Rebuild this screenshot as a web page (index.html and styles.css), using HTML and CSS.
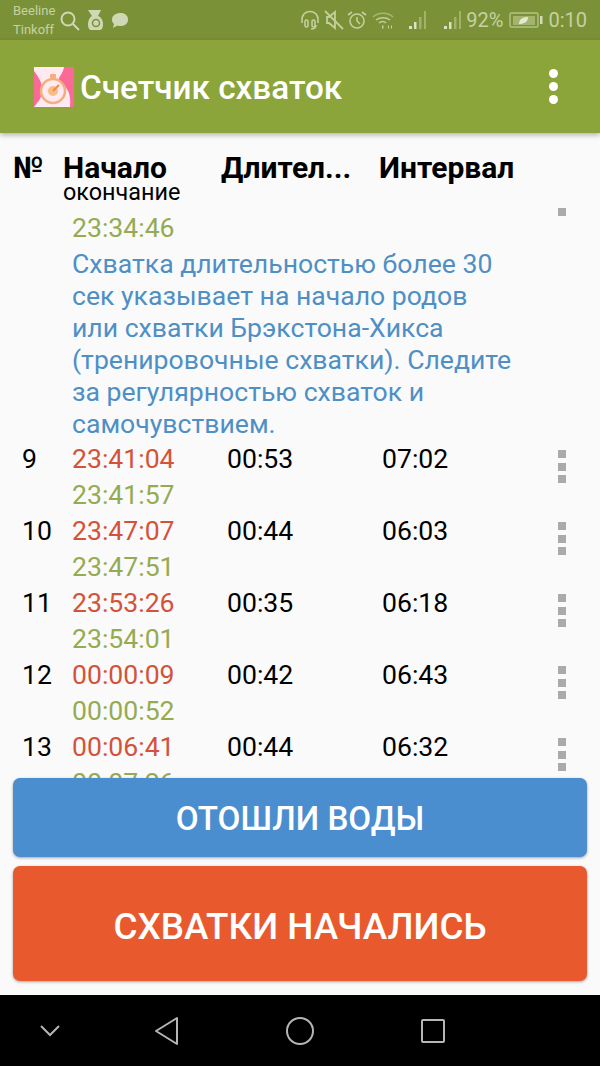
FILE: index.html
```html
<!DOCTYPE html>
<html lang="ru">
<head>
    <meta charset="UTF-8">
    <meta name="viewport" content="width=device-width, initial-scale=1.0">
    <title>Счетчик схваток</title>
    <link rel="stylesheet" href="styles.css">
</head>
<body>
    <div class="app">
        <div class="status-bar">
            <div class="carriers">
                <div>Beeline</div>
                <div>Tinkoff</div>
            </div>
            <svg class="icon-search" width="20" height="20" viewBox="0 0 20 20" fill="none" stroke="#cfd8b4" stroke-width="2">
                <circle cx="8" cy="8" r="6.500"/>
                <path d="M12.500 12.500L19 19"/>
            </svg>
            <svg class="icon-flask" width="17" height="20" viewBox="0 0 17 20">
                <path d="M1 0h13l-3 6c3 1 5 4 5 8 0 3-1 6-3 6H4c-2 0-3-3-3-6 0-4 2-7 4-8z" fill="#cfd8b4"/>
                <circle cx="9" cy="13" r="3.500" fill="none" stroke="#7b9137" stroke-width="1.500"/>
            </svg>
            <svg class="icon-bubble" width="16" height="15" viewBox="0 0 16 15">
                <path d="M8.500 0C13 0 16 2.500 16 6.500S13 13 8.500 13C7.500 13 6.500 13 5.500 12.500L1 15 2 11C.5 10 0 8 0 6.500 0 2.500 4 0 8.500 0z" fill="#cfd8b4"/>
            </svg>
            <div class="status-right">
                <svg width="20" height="20" viewBox="0 0 20 20" fill="none" stroke="#c3cf9c" stroke-width="1.600">
                    <path d="M2 13V9a8 7.500 0 0 1 16 0v4"/>
                    <path d="M16 15c0 3-2 4-5 4"/>
                    <rect x="5" y="10" width="3" height="7" rx="1.500"/>
                    <rect x="12" y="10" width="3" height="7" rx="1.500"/>
                </svg>
                <svg class="icon-mute" width="20" height="20" viewBox="0 0 20 20" fill="none" stroke="#c3cf9c" stroke-width="1.800">
                    <path d="M3 7h2l6-5v16l-6-5H3z"/>
                    <path d="M1 1l18 18"/>
                </svg>
                <svg class="icon-alarm" width="20" height="20" viewBox="0 0 20 20" fill="none" stroke="#c3cf9c" stroke-width="1.600">
                    <circle cx="10" cy="11" r="7"/>
                    <path d="M10 7v4l3 3M1 5l4-3M19 5l-4-3"/>
                </svg>
                <svg class="icon-wifi" width="22" height="20" viewBox="0 0 22 20" fill="none" stroke="#c3cf9c" stroke-width="1.500">
                    <path d="M1 7c5-5 15-5 20 0" stroke="#a6b774"/>
                    <path d="M4 10c4-3 10-3 14 0M7 13c2-2 5-2 7 0"/>
                    <path d="M10 17h1.500M16 17h1M19 17h1" stroke-width="3"/>
                </svg>
                <svg class="icon-signal" width="20" height="19" viewBox="0 0 20 19">
                    <path d="M1 15h3v3H1zM6 11h2.500v7H6z" fill="#dbe2c2"/>
                    <path d="M11 6h2.500v12H11zM16 0h2v18h-2z" fill="#a0b36a"/>
                </svg>
                <svg class="icon-signal-2" width="20" height="19" viewBox="0 0 20 19">
                    <path d="M1 15h3v3H1zM6 11h2.500v7H6z" fill="#dbe2c2"/>
                    <path d="M11 6h2.500v12H11zM16 0h2v18h-2z" fill="#a0b36a"/>
                </svg>
                <span class="battery-text">92%</span>
                <svg class="battery" width="34" height="18" viewBox="0 0 34 18">
                    <rect x="1" y="2" width="28" height="14" rx="1.500" fill="none" stroke="#b3c285" stroke-width="1.400"/>
                    <rect x="4" y="5" width="22" height="9" fill="#a3b56a"/>
                    <path d="M10 13c0-5 4-7 9-7 0 5-4 7-9 7z" fill="#e3e9ce"/>
                    <rect x="31" y="5" width="2.500" height="8" fill="#d4dcb4"/>
                </svg>
                <span class="clock">0:10</span>
            </div>
        </div>

        <div class="app-bar">
            <svg class="logo" width="40" height="40" viewBox="0 0 40 40">
                <rect width="40" height="40" rx="1" fill="#fa6a95"/>
                <path d="M0 0h30c-1 7-6 10-5 13 4 5 13 9 11 27H0c5-6 9-11 8-20C7 13 3 8 0 4z" fill="#feeaf0"/>
                <circle cx="19" cy="24" r="12" fill="#feeaf0" stroke="#f2ae7c" stroke-width="2.500"/>
                <circle cx="19" cy="24" r="5" fill="#f6bd85"/>
                <path d="M19 24l6-6" stroke="#ec8a48" stroke-width="2"/>
                <rect x="16" y="7" width="6" height="4" rx="1" fill="#f2ae7c"/>
            </svg>
            <h1 class="app-title">Счетчик схваток</h1>
            <div class="overflow-menu">
                <span></span><span></span><span></span>
            </div>
        </div>

        <div class="list-head">
            <div class="head-num">№</div>
            <div>
                <div class="head-title">Начало</div>
                <div class="head-sub">окончание</div>
            </div>
            <div class="head-title">Длител...</div>
            <div class="head-title">Интервал</div>
        </div>

        <div class="list">
            <div class="row">
                <div></div>
                <div class="time-end">23:34:46</div>
                <div></div>
                <div></div>
                <div class="row-menu row-menu-end"><span></span></div>
            </div>
            <div class="note">Схватка длительностью более 30 сек указывает на начало родов или схватки Брэкстона-Хикса (тренировочные схватки). Следите за регулярностью схваток и самочувствием.</div>

            <div class="row">
                <div>9</div>
                <div class="time-start">23:41:04</div>
                <div>00:53</div>
                <div>07:02</div>
                <div class="row-menu"><span></span><span></span><span></span></div>
                <div></div>
                <div class="time-end">23:41:57</div>
            </div>
            <div class="row">
                <div>10</div>
                <div class="time-start">23:47:07</div>
                <div>00:44</div>
                <div>06:03</div>
                <div class="row-menu"><span></span><span></span><span></span></div>
                <div></div>
                <div class="time-end">23:47:51</div>
            </div>
            <div class="row">
                <div>11</div>
                <div class="time-start">23:53:26</div>
                <div>00:35</div>
                <div>06:18</div>
                <div class="row-menu"><span></span><span></span><span></span></div>
                <div></div>
                <div class="time-end">23:54:01</div>
            </div>
            <div class="row">
                <div>12</div>
                <div class="time-start">00:00:09</div>
                <div>00:42</div>
                <div>06:43</div>
                <div class="row-menu"><span></span><span></span><span></span></div>
                <div></div>
                <div class="time-end">00:00:52</div>
            </div>
            <div class="row">
                <div>13</div>
                <div class="time-start">00:06:41</div>
                <div>00:44</div>
                <div>06:32</div>
                <div class="row-menu"><span></span><span></span><span></span></div>
                <div></div>
                <div class="time-end">00:07:26</div>
            </div>
        </div>

        <div class="buttons">
            <button class="btn btn-water">ОТОШЛИ ВОДЫ</button>
            <button class="btn btn-start">СХВАТКИ НАЧАЛИСЬ</button>
        </div>

        <div class="nav-bar">
            <svg width="24" height="16" viewBox="0 0 24 16" fill="none" stroke="#b5b5b5" stroke-width="2">
                <path d="M3 3l9 9 9-9"/>
            </svg>
            <svg width="26" height="30" viewBox="0 0 26 30" fill="none" stroke="#b5b5b5" stroke-width="2" stroke-linejoin="round">
                <path d="M2 15L23 2v26z"/>
            </svg>
            <svg width="30" height="30" viewBox="0 0 30 30" fill="none" stroke="#b5b5b5" stroke-width="2">
                <circle cx="15" cy="15" r="13"/>
            </svg>
            <svg width="26" height="26" viewBox="0 0 26 26" fill="none" stroke="#b5b5b5" stroke-width="2" stroke-linejoin="round">
                <rect x="2" y="2" width="22" height="22" rx="1"/>
            </svg>
        </div>
    </div>
</body>
</html>
```

FILE: styles.css
```css
* {
    box-sizing: border-box;
}
html, body {
    margin: 0;
    padding: 0;
}
body {
    font-family: Roboto, "Liberation Sans", sans-serif;
    background-color: #fafafa;
}
.app {
    width: 600px;
    height: 1066px;
    display: flex;
    flex-direction: column;
    overflow: hidden;
}

/* status bar */
.status-bar {
    height: 40px;
    flex: none;
    background-color: #7b9137;
    display: flex;
    align-items: center;
    padding: 0 13px;
    color: #c6d1a2;
}
.carriers {
    font-size: 13px;
    line-height: 19px;
    width: 47px;
    flex: none;
}
.icon-search {
    margin-top: 1px;
}
.icon-flask {
    margin-left: 7px;
}
.icon-bubble {
    margin-left: 8px;
    margin-top: 1px;
}
.status-right {
    margin-left: auto;
    display: flex;
    align-items: center;
}
.icon-mute {
    margin-left: 4px;
}
.icon-alarm {
    margin-left: 3px;
}
.icon-wifi {
    margin-left: 5px;
}
.icon-signal {
    margin-left: 14px;
}
.icon-signal-2 {
    margin-left: 15px;
}
.battery-text,
.clock {
    font-size: 20px;
}
.battery-text {
    margin-left: 3px;
}
.battery {
    margin: 0 5px 0 6px;
}

/* app bar */
.app-bar {
    height: 93px;
    flex: none;
    background-color: #8ba53b;
    display: flex;
    align-items: center;
    padding: 0 42px 0 34px;
    box-shadow: 0 2px 5px rgba(0, 0, 0, 0.3);
    position: relative;
}
.logo {
    margin-top: 1px;
}
.app-title {
    margin: 1px 0 0 6px;
    font-size: 33.300px;
    font-weight: 500;
    color: #fff;
}
.overflow-menu {
    margin-left: auto;
    display: flex;
    flex-direction: column;
    gap: 4.300px;
}
.overflow-menu span {
    width: 9px;
    height: 9px;
    border-radius: 50%;
    background-color: #fff;
}

/* list */
.list-head {
    height: 75px;
    flex: none;
    display: grid;
    grid-template-columns: 50px 158px 158px 1fr;
    padding: 21px 0 0 13px;
    color: #000;
}
.head-title,
.head-num {
    font-size: 30px;
    line-height: 28px;
    font-weight: 700;
}
.head-sub {
    font-size: 23.400px;
    line-height: 20px;
}
.list {
    flex: 1;
    min-height: 0;
    overflow: hidden;
    font-size: 26.600px;
    color: #000;
    padding-top: 2px;
}
.row {
    display: grid;
    grid-template-columns: 50px 155px 155px 174px 1fr;
    grid-auto-rows: 36px;
    line-height: 36px;
    padding-left: 22px;
}
.time-start {
    color: #d4523a;
}
.time-end {
    color: #95ab52;
}
.note {
    margin: 2px 0 1px 72px;
    width: 445px;
    line-height: 32px;
    color: #4e8fc6;
}
.row-menu {
    display: flex;
    flex-direction: column;
    gap: 4.500px;
    padding: 9px 0 0 2px;
}
.row-menu span {
    flex: none;
    width: 8px;
    height: 8px;
    background-color: #aaa;
    display: block;
}
.row-menu-end {
    padding-top: 0;
    margin-top: -2px;
}

/* buttons */
.buttons {
    flex: none;
    display: flex;
    flex-direction: column;
    gap: 9px;
    padding: 0 13px 14px;
    height: 217px;
}
.btn {
    border: none;
    border-radius: 7px;
    color: #fff;
    font-family: inherit;
    font-weight: 500;
    box-shadow: 0 1px 3px rgba(0, 0, 0, 0.35);
}
.btn-water {
    height: 79px;
    background-color: #4a8ecf;
    font-size: 33.200px;
    padding-top: 3px;
}
.btn-start {
    height: 115px;
    background-color: #e85a2e;
    font-size: 36.800px;
    padding-top: 6px;
}

/* nav bar */
.nav-bar {
    height: 71px;
    flex: none;
    background-color: #000;
    display: grid;
    grid-template-columns: 100px 133px 133px 133px;
    justify-items: center;
    align-items: center;
}
```
